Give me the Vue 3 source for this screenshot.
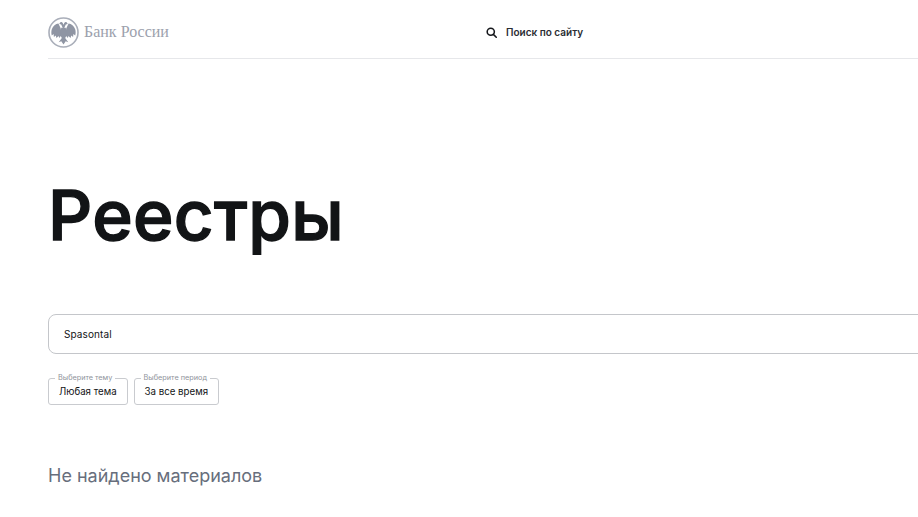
<template>
  <div class="page">
    <header class="header">
      <a class="logo" href="#">
        <svg class="emblem" width="31" height="31" viewBox="0 0 31 31">
          <circle cx="15.5" cy="15.5" r="14.5" fill="#fff" stroke="#a9aeb9" stroke-width="1.6" />
          <g fill="#8f95a3">
            <path d="M14.8 11 13.200 7.400l-2-.3 1-1.500c.8-.8 1.900-.6 2.500.3l.8 1.800.8-1.800c.6-.9 1.700-1.100 2.500-.3l1 1.500-2 .3L16.200 11z" />
            <path d="M12.800 11.400 10.400 6.600C7.600 7 5 9 3.800 12.200c-.6 2-.6 4.300 0 6.300l1.800-1.400.3 2.800 1.900-1.400.6 2.600 2.200-2 .6 1.800 2.300-2.700z" />
            <path d="M18.200 11.400 20.600 6.600c2.800.4 5.400 2.400 6.600 5.600.6 2 .6 4.300 0 6.300l-1.800-1.400-.3 2.800-1.900-1.400-.6 2.600-2.200-2-.6 1.800-2.300-2.700z" />
            <path d="M13.200 10.800h4.600l.9 7.200-1.500 3 3.100 4.200-2.600-1-2.200 3.400-2.200-3.400-2.600 1 3.100-4.200-1.500-3z" />
          </g>
        </svg>
        <span class="logo-text">Банк России</span>
      </a>
      <div class="search">
        <svg width="11" height="11" viewBox="0 0 12 12" fill="none" stroke="#16181c" stroke-width="1.700">
          <circle cx="5.200" cy="5.200" r="3.900" />
          <path d="M8 8l3.200 3.200" stroke-linecap="round" />
        </svg>
        <span>Поиск по сайту</span>
      </div>
    </header>

    <h1 class="title">Реестры</h1>

    <div class="query">Spasontal</div>

    <div class="filters">
      <div v-for="f in filters" :key="f.label" class="filter">
        <span class="filter-label">{{ f.label }}</span>
        {{ f.value }}
      </div>
    </div>

    <p class="empty">Не найдено материалов</p>
  </div>
</template>

<script setup>
const filters = [
  { label: 'Выберите тему', value: 'Любая тема' },
  { label: 'Выберите период', value: 'За все время' }
]
</script>

<style>
html,
body {
  margin: 0;
  background: #fff;
  overflow: hidden;
}
</style>

<style scoped>
.page {
  width: 918px;
  height: 517px;
  padding-left: 48px;
  box-sizing: border-box;
  overflow: hidden;
  font-family: Inter, "Noto Sans", sans-serif;
  color: #121416;
}

.header {
  display: flex;
  align-items: center;
  box-sizing: border-box;
  height: 59px;
  width: 900px;
  padding-top: 6px;
  border-bottom: 1px solid #e6e7ea;
}

.logo {
  display: flex;
  align-items: center;
  gap: 5px;
  width: 438px;
  text-decoration: none;
}

.logo-text {
  font-family: "Liberation Serif", serif;
  font-size: 16px;
  color: #9ca1ad;
}

.search {
  display: flex;
  align-items: center;
  gap: 9px;
  font-size: 10px;
  font-weight: 600;
  color: #2a2d33;
}

.title {
  margin: 114px 0 0;
  font-size: 69px;
  line-height: 84px;
  font-weight: 500;
  letter-spacing: 0.3px;
  -webkit-text-stroke: 1.4px #121416;
}

.query {
  box-sizing: border-box;
  width: 900px;
  height: 40px;
  margin-top: 57px;
  padding-left: 15px;
  border: 1px solid #c4c6ca;
  border-radius: 8px;
  font-size: 10px;
  letter-spacing: 0.1px;
  line-height: 38px;
}

.filters {
  display: flex;
  gap: 6px;
  margin-top: 24px;
}

.filter {
  position: relative;
  box-sizing: border-box;
  height: 27px;
  padding: 0 10px;
  border: 1px solid #c9cbcf;
  border-radius: 3px;
  font-size: 9.700px;
  line-height: 26px;
  white-space: nowrap;
}

.filter-label {
  position: absolute;
  top: -6px;
  left: 6px;
  padding: 0 3px;
  background: #fff;
  font-size: 7.300px;
  line-height: 10px;
  color: #8f949c;
}

.empty {
  margin: 60px 0 0;
  font-size: 18px;
  line-height: 22px;
  color: #676e7c;
}
</style>
